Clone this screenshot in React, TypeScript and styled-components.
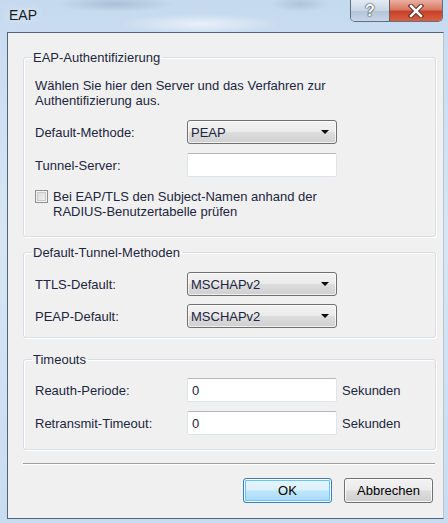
import React from 'react';
import styled, { createGlobalStyle } from 'styled-components';

const GlobalStyle = createGlobalStyle`
  html, body {
    margin: 0;
    padding: 0;
    background: #ffffff;
  }
  body {
    font-family: 'Liberation Sans', Arial, sans-serif;
  }
`;

const Window = styled.div`
  width: 448px;
  height: 523px;
  display: flex;
  flex-direction: column;
  overflow: hidden;
  background:
    radial-gradient(ellipse 60px 8px at 115px 4px, rgba(120, 140, 170, 0.35), transparent),
    radial-gradient(ellipse 30px 8px at 300px 4px, rgba(120, 140, 170, 0.3), transparent),
    radial-gradient(ellipse 80px 10px at 200px 24px, rgba(255, 255, 255, 0.6), transparent),
    linear-gradient(180deg, #c6daef 0%, #d6e6f6 45%, #c8dcf1 100%);
`;

const TitleBar = styled.div`
  height: 32px;
  display: flex;
  justify-content: space-between;
  align-items: flex-start;
  padding: 0 5px 0 9px;
  flex-shrink: 0;
`;

const Title = styled.div`
  margin-top: 7px;
  font-family: 'Liberation Sans', Arial, sans-serif;
  font-size: 14px;
  color: #1b1b1b;
  text-shadow: 0 0 8px rgba(255, 255, 255, 0.9);
`;

const CaptionButtons = styled.div`
  display: flex;
  height: 21px;
  border: 1px solid #5e6f86;
  border-top: none;
  border-radius: 0 0 5px 5px;
  overflow: hidden;
`;

const HelpButton = styled.div`
  width: 38px;
  display: flex;
  align-items: center;
  justify-content: center;
  background: linear-gradient(180deg, #e3ebf4 0%, #c9d6e4 50%, #b3c4d7 51%, #c6d6e7 100%);
  border-right: 1px solid #6e5a5a;
  font-family: 'Liberation Sans', Arial, sans-serif;
  font-weight: bold;
  font-size: 16px;
  color: #ffffff;
  text-shadow: 0 0 1px #3d4a5c, 0 0 2px #3d4a5c, 0 0 1px #3d4a5c;
`;

const CloseButton = styled.div`
  width: 52px;
  display: flex;
  align-items: center;
  justify-content: center;
  background: linear-gradient(180deg, #eab0a2 0%, #d87a63 45%, #c8412a 55%, #d8623f 100%);
`;

const Client = styled.div`
  flex: 1;
  margin: 0 4px 4px 7px;
  border: 1px solid #55637a;
  border-right-color: #b8c4d2;
  background: #f0f0f0;
  display: flex;
  flex-direction: column;
  padding: 17px 7px 0 15px;
`;

const Group = styled.fieldset<{ $pt: number; $pb: number; $mb: number }>`
  margin: 0 0 ${(p) => p.$mb}px 0;
  padding: ${(p) => p.$pt}px 10px ${(p) => p.$pb}px 11px;
  border: 1px solid #d5dfe5;
  border-radius: 3px;
  box-shadow: inset 1px 1px 0 #ffffff, 1px 1px 0 #ffffff;
  display: flex;
  flex-direction: column;
  min-width: 0;
`;

const Legend = styled.legend`
  padding: 0 2px 0 1px;
  margin-left: -3px;
  font-size: 13px;
  line-height: 15px;
  color: #1c2640;
`;

const Text = styled.div`
  font-size: 13px;
  line-height: 15px;
  color: #1c2640;
`;

const Description = styled(Text)`
  margin-bottom: 12px;
`;

const Row = styled.div<{ $mb: number }>`
  display: flex;
  align-items: center;
  height: 24px;
  margin-bottom: ${(p) => p.$mb}px;
`;

const Label = styled(Text)`
  width: 152px;
  flex-shrink: 0;
`;

const Select = styled.div`
  box-sizing: border-box;
  width: 150px;
  height: 24px;
  border: 1px solid #707070;
  border-radius: 3px;
  background: linear-gradient(180deg, #f3f3f3 0%, #ebebeb 48%, #dddddd 52%, #cfcfcf 100%);
  box-shadow: inset 0 0 0 1px rgba(255, 255, 255, 0.7);
  display: flex;
  align-items: center;
  justify-content: space-between;
  padding: 0 7px 0 3px;
  font-size: 13px;
  color: #1c2640;
`;

const Arrow = styled.div`
  width: 0;
  height: 0;
  border-left: 4px solid transparent;
  border-right: 4px solid transparent;
  border-top: 4px solid #000000;
`;

const Input = styled.div`
  box-sizing: border-box;
  width: 150px;
  height: 24px;
  background: #ffffff;
  border: 1px solid #dfe4ea;
  border-top-color: #b4b8be;
  border-radius: 2px;
  display: flex;
  align-items: center;
  padding: 0 4px;
  font-size: 13px;
  color: #1c2640;
`;

const Unit = styled(Text)`
  margin-left: 5px;
`;

const CheckRow = styled.div`
  display: flex;
  align-items: flex-start;
`;

const CheckBox = styled.div`
  box-sizing: border-box;
  width: 13px;
  height: 13px;
  margin-top: 1px;
  margin-right: 5px;
  flex-shrink: 0;
  border: 1px solid #8e8f8f;
  background: linear-gradient(135deg, #d8d8d8 0%, #f4f4f4 100%);
  box-shadow: inset 0 0 0 1px #f4f4f4, inset 0 0 0 2px #c8c8c8;
`;

const Separator = styled.div`
  height: 1px;
  background: #a0a0a0;
  border-bottom: 1px solid #ffffff;
  margin: 0 1px 13px 0;
`;

const Buttons = styled.div`
  display: flex;
  justify-content: flex-end;
  gap: 12px;
  padding-right: 3px;
`;

const Button = styled.div<{ $default?: boolean }>`
  box-sizing: border-box;
  width: 89px;
  height: 25px;
  border-radius: 3px;
  display: flex;
  align-items: center;
  justify-content: center;
  font-size: 13px;
  color: #000000;
  border: 1px solid ${(p) => (p.$default ? '#3c7fb1' : '#707070')};
  background: ${(p) =>
    p.$default
      ? 'linear-gradient(180deg, #eaf6fd 0%, #d9f0fc 48%, #bee6fd 52%, #a7d9f5 100%)'
      : 'linear-gradient(180deg, #f2f2f2 0%, #ebebeb 48%, #dddddd 52%, #cfcfcf 100%)'};
  box-shadow: ${(p) =>
    p.$default
      ? 'inset 0 0 0 1px #ffffff, inset 0 0 0 2px #62c7f8'
      : 'inset 0 0 0 1px rgba(255, 255, 255, 0.8)'};
`;

const CloseIcon = () => (
  <svg width="16" height="14" viewBox="0 0 16 14">
    <path d="M3 2 L13 12 M13 2 L3 12" stroke="#5a2a22" strokeWidth="4.5" strokeLinecap="square" />
    <path d="M3 2 L13 12 M13 2 L3 12" stroke="#ffffff" strokeWidth="2.5" strokeLinecap="square" />
  </svg>
);

export default function App() {
  return (
    <>
      <GlobalStyle />
      <Window>
        <TitleBar>
          <Title>EAP</Title>
          <CaptionButtons>
            <HelpButton>?</HelpButton>
            <CloseButton>
              <CloseIcon />
            </CloseButton>
          </CaptionButtons>
        </TitleBar>
        <Client>
          <Group $pt={13} $pb={17} $mb={8}>
            <Legend>EAP-Authentifizierung</Legend>
            <Description>
              Wählen Sie hier den Server und das Verfahren zur
              <br />
              Authentifizierung aus.
            </Description>
            <Row $mb={9}>
              <Label>Default-Methode:</Label>
              <Select>
                PEAP
                <Arrow />
              </Select>
            </Row>
            <Row $mb={12}>
              <Label>Tunnel-Server:</Label>
              <Input />
            </Row>
            <CheckRow>
              <CheckBox />
              <Text>
                Bei EAP/TLS den Subject-Namen anhand der
                <br />
                RADIUS-Benutzertabelle prüfen
              </Text>
            </CheckRow>
          </Group>
          <Group $pt={12} $pb={9} $mb={14}>
            <Legend>Default-Tunnel-Methoden</Legend>
            <Row $mb={8}>
              <Label>TTLS-Default:</Label>
              <Select>
                MSCHAPv2
                <Arrow />
              </Select>
            </Row>
            <Row $mb={0}>
              <Label>PEAP-Default:</Label>
              <Select>
                MSCHAPv2
                <Arrow />
              </Select>
            </Row>
          </Group>
          <Group $pt={11} $pb={14} $mb={13}>
            <Legend>Timeouts</Legend>
            <Row $mb={9}>
              <Label>Reauth-Periode:</Label>
              <Input>0</Input>
              <Unit>Sekunden</Unit>
            </Row>
            <Row $mb={0}>
              <Label>Retransmit-Timeout:</Label>
              <Input>0</Input>
              <Unit>Sekunden</Unit>
            </Row>
          </Group>
          <Separator />
          <Buttons>
            <Button $default>OK</Button>
            <Button>Abbrechen</Button>
          </Buttons>
        </Client>
      </Window>
    </>
  );
}
